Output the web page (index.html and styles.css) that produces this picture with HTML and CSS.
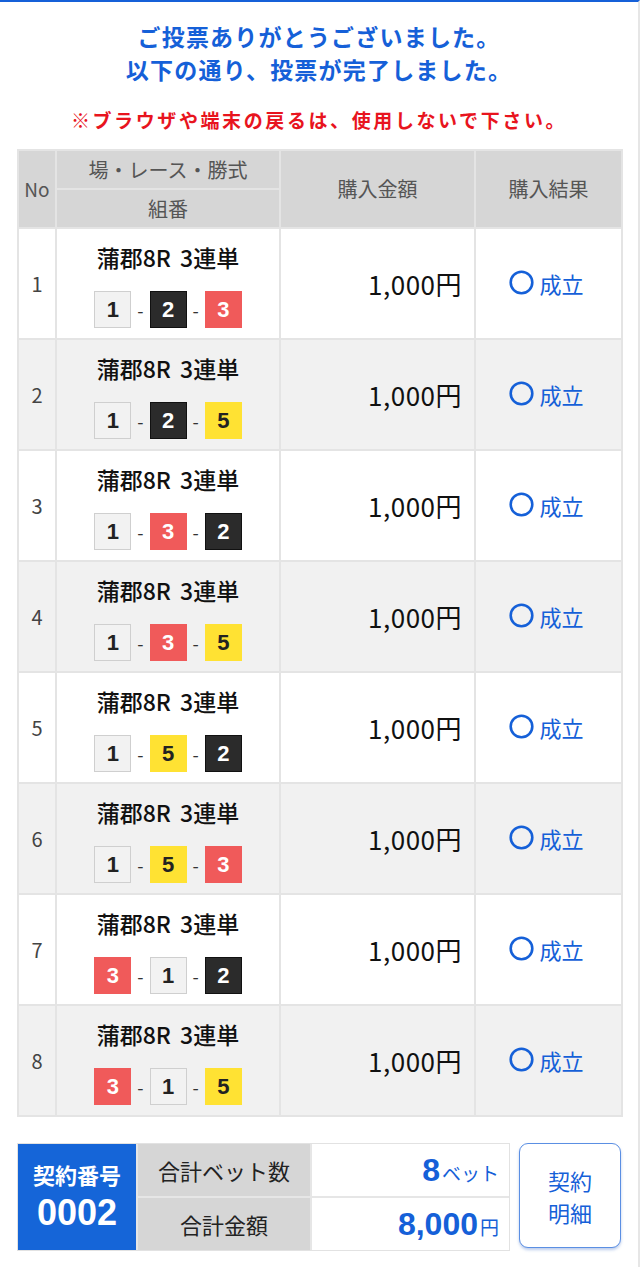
FILE: index.html
```html
<!DOCTYPE html>
<html lang="ja">
<head>
<meta charset="utf-8">
<link rel="stylesheet" href="styles.css">
</head>
<body>
<div class="page">
  <div class="msg">
    <p class="thanks">ご投票ありがとうございました。<br>以下の通り、投票が完了しました。</p>
    <p class="warn">※ブラウザや端末の戻るは、使用しないで下さい。</p>
  </div>

  <table class="bets">
    <colgroup><col class="c-no"><col class="c-race"><col class="c-amt"><col class="c-res"></colgroup>
    <thead>
      <tr><th rowspan="2" class="no">No</th><th class="sub">場・レース・勝式</th><th rowspan="2">購入金額</th><th rowspan="2">購入結果</th></tr>
      <tr><th class="sub">組番</th></tr>
    </thead>
    <tbody>
      <tr><td class="no">1</td><td class="race"><div class="rname">蒲郡8R 3連単</div><div class="combo"><span class="b b1">1</span>-<span class="b b2">2</span>-<span class="b b3">3</span></div></td><td class="amt">1,000円</td><td class="res"><span class="ok"><svg width="25" height="25" viewBox="0 0 25 25"><circle cx="12.5" cy="12.5" r="10.8" fill="none" stroke="#1560d8" stroke-width="2.6"/></svg>成立</span></td></tr>
      <tr><td class="no">2</td><td class="race"><div class="rname">蒲郡8R 3連単</div><div class="combo"><span class="b b1">1</span>-<span class="b b2">2</span>-<span class="b b5">5</span></div></td><td class="amt">1,000円</td><td class="res"><span class="ok"><svg width="25" height="25" viewBox="0 0 25 25"><circle cx="12.5" cy="12.5" r="10.8" fill="none" stroke="#1560d8" stroke-width="2.6"/></svg>成立</span></td></tr>
      <tr><td class="no">3</td><td class="race"><div class="rname">蒲郡8R 3連単</div><div class="combo"><span class="b b1">1</span>-<span class="b b3">3</span>-<span class="b b2">2</span></div></td><td class="amt">1,000円</td><td class="res"><span class="ok"><svg width="25" height="25" viewBox="0 0 25 25"><circle cx="12.5" cy="12.5" r="10.8" fill="none" stroke="#1560d8" stroke-width="2.6"/></svg>成立</span></td></tr>
      <tr><td class="no">4</td><td class="race"><div class="rname">蒲郡8R 3連単</div><div class="combo"><span class="b b1">1</span>-<span class="b b3">3</span>-<span class="b b5">5</span></div></td><td class="amt">1,000円</td><td class="res"><span class="ok"><svg width="25" height="25" viewBox="0 0 25 25"><circle cx="12.5" cy="12.5" r="10.8" fill="none" stroke="#1560d8" stroke-width="2.6"/></svg>成立</span></td></tr>
      <tr><td class="no">5</td><td class="race"><div class="rname">蒲郡8R 3連単</div><div class="combo"><span class="b b1">1</span>-<span class="b b5">5</span>-<span class="b b2">2</span></div></td><td class="amt">1,000円</td><td class="res"><span class="ok"><svg width="25" height="25" viewBox="0 0 25 25"><circle cx="12.5" cy="12.5" r="10.8" fill="none" stroke="#1560d8" stroke-width="2.6"/></svg>成立</span></td></tr>
      <tr><td class="no">6</td><td class="race"><div class="rname">蒲郡8R 3連単</div><div class="combo"><span class="b b1">1</span>-<span class="b b5">5</span>-<span class="b b3">3</span></div></td><td class="amt">1,000円</td><td class="res"><span class="ok"><svg width="25" height="25" viewBox="0 0 25 25"><circle cx="12.5" cy="12.5" r="10.8" fill="none" stroke="#1560d8" stroke-width="2.6"/></svg>成立</span></td></tr>
      <tr><td class="no">7</td><td class="race"><div class="rname">蒲郡8R 3連単</div><div class="combo"><span class="b b3">3</span>-<span class="b b1">1</span>-<span class="b b2">2</span></div></td><td class="amt">1,000円</td><td class="res"><span class="ok"><svg width="25" height="25" viewBox="0 0 25 25"><circle cx="12.5" cy="12.5" r="10.8" fill="none" stroke="#1560d8" stroke-width="2.6"/></svg>成立</span></td></tr>
      <tr><td class="no">8</td><td class="race"><div class="rname">蒲郡8R 3連単</div><div class="combo"><span class="b b3">3</span>-<span class="b b1">1</span>-<span class="b b5">5</span></div></td><td class="amt">1,000円</td><td class="res"><span class="ok"><svg width="25" height="25" viewBox="0 0 25 25"><circle cx="12.5" cy="12.5" r="10.8" fill="none" stroke="#1560d8" stroke-width="2.6"/></svg>成立</span></td></tr>
    </tbody>
  </table>

  <div class="summary">
    <div class="sumgrid">
      <div class="contract"><span class="ct-label">契約番号</span><span class="ct-num">0002</span></div>
      <div class="lbl">合計ベット数</div>
      <div class="val"><span class="big">8</span><span class="unit">ベット</span></div>
      <div class="lbl">合計金額</div>
      <div class="val"><span class="big">8,000</span><span class="unit">円</span></div>
    </div>
    <button class="detail">契約<br>明細</button>
  </div>
</div>
</body>
</html>
```

FILE: styles.css
```css
* { box-sizing: border-box; }
html, body { margin: 0; padding: 0; background: #fff; }
body {
  font-family: "Noto Sans CJK JP", "Noto Sans", sans-serif;
  color: #222;
}
.page {
  width: 640px;
  min-height: 1267px;
  border-top: 2px solid #1560d8;
  border-right: 2px solid #e6e6e6;
  padding: 0 17px 20px 17px;
}
.msg { text-align: center; padding-top: 18px; }
.thanks {
  margin: 0;
  color: #1560d8;
  font-size: 23px;
  font-weight: 700;
  line-height: 33px;
  letter-spacing: 1.2px;
}
.warn {
  margin: 21px 0 0 0;
  color: #e8141e;
  font-size: 19px;
  font-weight: 700;
  line-height: 26px;
  letter-spacing: 2.6px;
}
.bets {
  margin-top: 16px;
  width: 604px;
  border-collapse: collapse;
  table-layout: fixed;
  border: 2px solid #e4e4e4;
}
.c-no { width: 38px; }
.c-race { width: 224px; }
.c-amt { width: 195px; }
.c-res { width: 147px; }
.bets th, .bets td { border: 2px solid #e4e4e4; padding: 0; }
.bets th {
  background: #d6d6d6;
  color: #555;
  font-weight: 400;
  font-size: 20px;
  height: 39px;
  line-height: 20px;
  text-align: center;
}
.bets th.no { font-size: 19px; color: #555; }
.bets tbody tr { height: 111px; }
.bets tbody tr:nth-child(even) td { background: #f1f1f1; }
.bets td.no { text-align: center; font-size: 20px; color: #444; }
.race { text-align: center; vertical-align: top; }
.rname {
  margin-top: 12px;
  font-size: 23px;
  font-weight: 500;
  line-height: 32px;
  color: #111;
  word-spacing: 4px;
}
.combo {
  margin-top: 18px;
  display: flex;
  justify-content: center;
  align-items: center;
  gap: 6px;
  font-size: 18px;
  color: #333;
}
.b {
  width: 37px;
  height: 37px;
  display: inline-flex;
  align-items: center;
  justify-content: center;
  font-family: "Liberation Sans", Arial, sans-serif;
  font-weight: 700;
  font-size: 22px;
  border: 1px solid transparent;
}
.b1 { background: #f2f2f2; border-color: #cfcfcf; color: #222; }
.b2 { background: #2b2b2b; border-color: #111; color: #fff; }
.b3 { background: #f05a5a; color: #fff; }
.b5 { background: #ffe233; color: #222; }
.amt {
  text-align: right;
  padding-right: 12px !important;
  font-size: 26px;
  color: #111;
  letter-spacing: 0.5px;
}
.res { text-align: center; }
.ok {
  display: inline-flex;
  align-items: center;
  gap: 5px;
  color: #1560d8;
  font-size: 22px;
  margin-right: 4px;
}
.summary {
  margin-top: 26px;
  display: flex;
  gap: 9px;
  align-items: flex-start;
}
.sumgrid {
  width: 493px;
  display: grid;
  grid-template-columns: 118px 172px 1fr;
  grid-template-rows: 52px 52px;
  border: 1px solid #e2e2e2;
  gap: 2px;
  background: #e6e6e6;
}
.contract {
  grid-row: 1 / 3;
  background: #1565d8;
  color: #fff;
  display: flex;
  flex-direction: column;
  align-items: center;
  justify-content: center;
  font-weight: 700;
}
.ct-label { font-size: 22px; line-height: 32px; }
.ct-num { font-size: 36px; line-height: 46px; font-family: "Liberation Sans", Arial, sans-serif; }
.lbl {
  background: #d6d6d6;
  display: flex;
  align-items: center;
  justify-content: center;
  font-size: 22px;
  color: #222;
}
.val {
  background: #fff;
  display: flex;
  align-items: baseline;
  justify-content: flex-end;
  padding: 4px 10px 0 0;
  color: #1560d8;
}
.val .big { font-size: 32px; font-weight: 700; font-family: "Liberation Sans", Arial, sans-serif; line-height: 44px; }
.val .unit { font-size: 19px; margin-left: 2px; }
.detail {
  width: 102px;
  height: 105px;
  border: 1.5px solid #5b8fe3;
  border-radius: 9px;
  background: #fff;
  color: #1560d8;
  font-family: "Noto Sans CJK JP", sans-serif;
  font-size: 22px;
  line-height: 32px;
  box-shadow: 0 2px 3px rgba(60, 110, 200, 0.35);
  padding: 0;
}
```
